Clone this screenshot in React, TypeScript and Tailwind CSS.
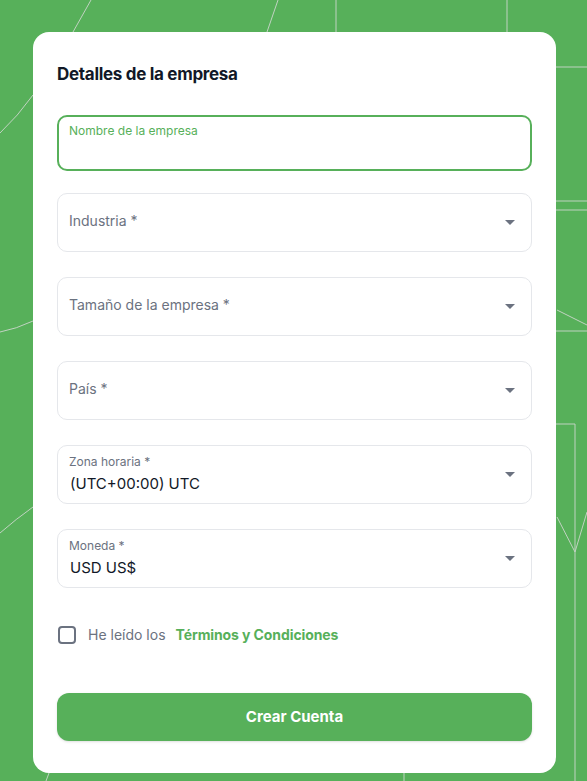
const font = { fontFamily: 'Inter, "Noto Sans", sans-serif' };

function Caret() {
  return (
    <svg width="10" height="5" viewBox="0 0 10 5" className="shrink-0">
      <path d="M0 0h10L5 5z" fill="#6b7280" />
    </svg>
  );
}

function SelectField({ label, value }: { label: string; value?: string }) {
  return (
    <div className="h-[59px] rounded-[10px] border border-[#e5e7eb] bg-white flex items-center justify-between pl-[11px] pr-4">
      {value ? (
        <div className="flex flex-col pt-[1px]">
          <span className="text-[12px] leading-4 text-[#6b7280]">{label} *</span>
          <span className="text-[15px] leading-6 mt-[2px] ml-[1px] text-[#111827]">{value}</span>
        </div>
      ) : (
        <span className="text-[14px] text-[#6b7280] pb-[5px]">{label} *</span>
      )}
      <Caret />
    </div>
  );
}

function Background() {
  return (
    <svg className="absolute inset-0 w-full h-full" viewBox="0 0 587 781" preserveAspectRatio="none">
      <g fill="none" stroke="#d4d9d4" strokeWidth="1" opacity="0.85">
        <path d="M91 0 L73 32" />
        <path d="M33 95 Q 18 116 0 133" />
        <path d="M278 0 L267 32" />
        <path d="M336 0 V32" />
        <path d="M507 0 V32" />
        <path d="M556 67 H587" />
        <path d="M556 201 H587" />
        <path d="M556 210 H587" />
        <path d="M557 310 L587 325" />
        <path d="M556 331 H587" />
        <path d="M556 424 H575 V781" />
        <path d="M557 517 L575 552 L587 512" />
        <path d="M0 332 Q 16 329 33 321" />
        <path d="M0 533 Q 16 519 33 507" />
        <path d="M49 773 L46 781" />
        <path d="M404 773 V781" />
      </g>
    </svg>
  );
}

export default function App() {
  return (
    <div className="relative min-h-screen bg-[#57b05a] overflow-hidden pt-8 pl-[33px]" style={font}>
      <Background />
      <div className="relative w-[523px] rounded-2xl bg-white px-6 pt-[30px] pb-8">
        <h2 className="text-[17px] leading-6 font-bold text-[#111827] tracking-[-0.3px]">Detalles de la empresa</h2>

        <div className="mt-[29px] h-[56px] rounded-[10px] border-2 border-[#57b05a] px-[10px] pt-[6px]">
          <span className="block text-[12px] leading-4 text-[#57b05a]">Nombre de la empresa</span>
        </div>

        <div className="mt-[22px] flex flex-col gap-[25px]">
          <SelectField label="Industria" />
          <SelectField label="Tamaño de la empresa" />
          <SelectField label="País" />
          <SelectField label="Zona horaria" value="(UTC+00:00) UTC" />
          <SelectField label="Moneda" value="USD US$" />
        </div>

        <label className="mt-[36px] flex items-center gap-3 pl-[1px]">
          <span className="w-[18px] h-[18px] rounded-[4px] border-2 border-[#6b7280] bg-white" />
          <span className="text-[14px] text-[#6b7280]">He leído los</span>
          <span className="text-[14px] font-bold text-[#57b05a] -ml-[2px] tracking-[-0.1px]">Términos y Condiciones</span>
        </label>

        <button className="mt-[48px] w-full h-12 rounded-xl bg-[#57b05a] text-white text-[15px] font-bold shadow-sm">
          Crear Cuenta
        </button>
      </div>
    </div>
  );
}
